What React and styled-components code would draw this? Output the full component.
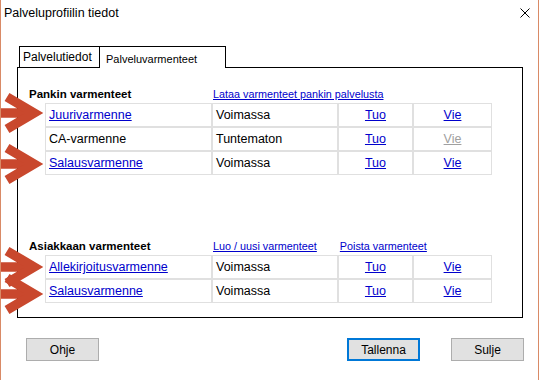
import React from 'react';
import styled, { createGlobalStyle } from 'styled-components';

const GlobalStyle = createGlobalStyle`
  html, body {
    margin: 0;
    padding: 0;
    background: #fff;
  }
  body {
    font-family: "Liberation Sans", Arial, sans-serif;
    color: #000;
  }
`;

const Window = styled.div`
  position: relative;
  width: 539px;
  height: 380px;
  box-sizing: border-box;
  border-left: 1px solid #d98a66;
  border-right: 1px solid #d98a66;
  background: #fff;
  overflow: hidden;
`;

const TitleBar = styled.div`
  height: 25px;
  display: flex;
  align-items: center;
  justify-content: space-between;
  padding: 0 8px 0 3px;
  font-size: 12.5px;
`;

const CloseIcon = styled.svg`
  display: block;
`;

const TabStrip = styled.div`
  position: relative;
  z-index: 1;
  display: flex;
  align-items: flex-end;
  margin: 21px 0 0 18px;
`;

const Tab = styled.div`
  box-sizing: border-box;
  width: ${p => (p.$active ? 126 : 81)}px;
  height: ${p => (p.$active ? 22 : 21)}px;
  margin-bottom: ${p => (p.$active ? -1 : 0)}px;
  border-top: 1px solid #000;
  border-right: 1px solid #000;
  border-left: ${p => (p.$active ? 'none' : '1px solid #000')};
  background: #fff;
  font-size: ${p => (p.$active ? 11 : 12)}px;
  line-height: ${p => (p.$active ? 13 : 14)}px;
  padding: ${p => (p.$active ? '6px 0 0 6px' : '3px 0 0 3px')};
`;

const Panel = styled.div`
  box-sizing: border-box;
  width: 506px;
  height: 251px;
  margin-left: 16px;
  border: 1px solid #000;
`;

const Section = styled.section`
  padding-top: ${p => p.$top}px;
`;

const SectionHead = styled.div`
  display: flex;
  align-items: center;
  height: 14px;
  padding-left: 11px;
`;

const HeadLabel = styled.div`
  width: 184px;
  font-weight: bold;
  font-size: 11.5px;
`;

const HeadLinks = styled.div`
  display: flex;
  gap: 23px;
`;

const HeadLink = styled.a`
  font-size: 10.8px;
  color: #0000cc;
  text-decoration: underline;
  cursor: pointer;
`;

const CertGrid = styled.div`
  display: grid;
  grid-template-columns: 167px 126px 75px 79px;
  margin: 2px 0 0 27px;
`;

const Cell = styled.div`
  box-sizing: border-box;
  height: 24px;
  border: 1px solid #e0e0e0;
  display: flex;
  align-items: center;
  justify-content: ${p => (p.$center ? 'center' : 'flex-start')};
  padding-left: ${p => (p.$center ? 0 : 3)}px;
  font-size: 12.5px;
`;

const CellLink = styled.a`
  color: ${p => (p.$disabled ? '#a0a0a0' : '#0000cc')};
  text-decoration: underline;
  cursor: pointer;
`;

const Footer = styled.div`
  display: flex;
  margin-top: 20px;
  padding: 0 14px 0 25px;
  gap: 31px;
`;

const Button = styled.button`
  box-sizing: border-box;
  width: 73px;
  height: 23px;
  padding: 0;
  background: #e1e1e1;
  border: ${p => (p.$primary ? '2px solid #0078d7' : '1px solid #adadad')};
  margin-left: ${p => (p.$push ? 'auto' : '0')};
  font: 12px "Liberation Sans", Arial, sans-serif;
  color: #000;
`;

const Annotations = styled.svg`
  position: absolute;
  left: -1px;
  top: 0;
  pointer-events: none;
  z-index: 2;
`;

const bankCerts = [
  { name: 'Juurivarmenne', link: true, status: 'Voimassa', canExport: true },
  { name: 'CA-varmenne', link: false, status: 'Tuntematon', canExport: false },
  { name: 'Salausvarmenne', link: true, status: 'Voimassa', canExport: true },
];

const clientCerts = [
  { name: 'Allekirjoitusvarmenne', link: true, status: 'Voimassa', canExport: true },
  { name: 'Salausvarmenne', link: true, status: 'Voimassa', canExport: true },
];

function CertRows({ rows }) {
  return (
    <CertGrid>
      {rows.map(r => (
        <React.Fragment key={r.name}>
          <Cell>{r.link ? <CellLink>{r.name}</CellLink> : r.name}</Cell>
          <Cell>{r.status}</Cell>
          <Cell $center><CellLink>Tuo</CellLink></Cell>
          <Cell $center><CellLink $disabled={!r.canExport}>Vie</CellLink></Cell>
        </React.Fragment>
      ))}
    </CertGrid>
  );
}

// hand-drawn style arrow; the miter join puts the tip ~9px right of the vertex
function Arrow({ y }) {
  const vx = 34;
  return (
    <g stroke="#c9482d" strokeWidth="9.5" fill="none" strokeLinejoin="miter">
      <path d={`M0 ${y} L${vx - 2} ${y}`} />
      <path d={`M${vx - 27} ${y - 16} L${vx} ${y} L${vx - 27} ${y + 16}`} />
    </g>
  );
}

export default function App() {
  return (
    <>
      <GlobalStyle />
      <Window>
        <TitleBar>
          <span>Palveluprofiilin tiedot</span>
          <CloseIcon width="10" height="10" viewBox="0 0 10 10">
            <path d="M0.5 0.5 L9.5 9.5 M9.5 0.5 L0.5 9.5" stroke="#000" strokeWidth="1" />
          </CloseIcon>
        </TitleBar>

        <TabStrip>
          <Tab>Palvelutiedot</Tab>
          <Tab $active>Palveluvarmenteet</Tab>
        </TabStrip>

        <Panel>
          <Section $top={19}>
            <SectionHead>
              <HeadLabel>Pankin varmenteet</HeadLabel>
              <HeadLinks>
                <HeadLink>Lataa varmenteet pankin palvelusta</HeadLink>
              </HeadLinks>
            </SectionHead>
            <CertRows rows={bankCerts} />
          </Section>

          <Section $top={64}>
            <SectionHead>
              <HeadLabel>Asiakkaan varmenteet</HeadLabel>
              <HeadLinks>
                <HeadLink>Luo / uusi varmenteet</HeadLink>
                <HeadLink>Poista varmenteet</HeadLink>
              </HeadLinks>
            </SectionHead>
            <CertRows rows={clientCerts} />
          </Section>
        </Panel>

        <Footer>
          <Button>Ohje</Button>
          <Button $primary $push>Tallenna</Button>
          <Button>Sulje</Button>
        </Footer>

        <Annotations width="60" height="380">
          <Arrow y={113} />
          <Arrow y={164} />
          <Arrow y={267} />
          <Arrow y={294} />
        </Annotations>
      </Window>
    </>
  );
}
